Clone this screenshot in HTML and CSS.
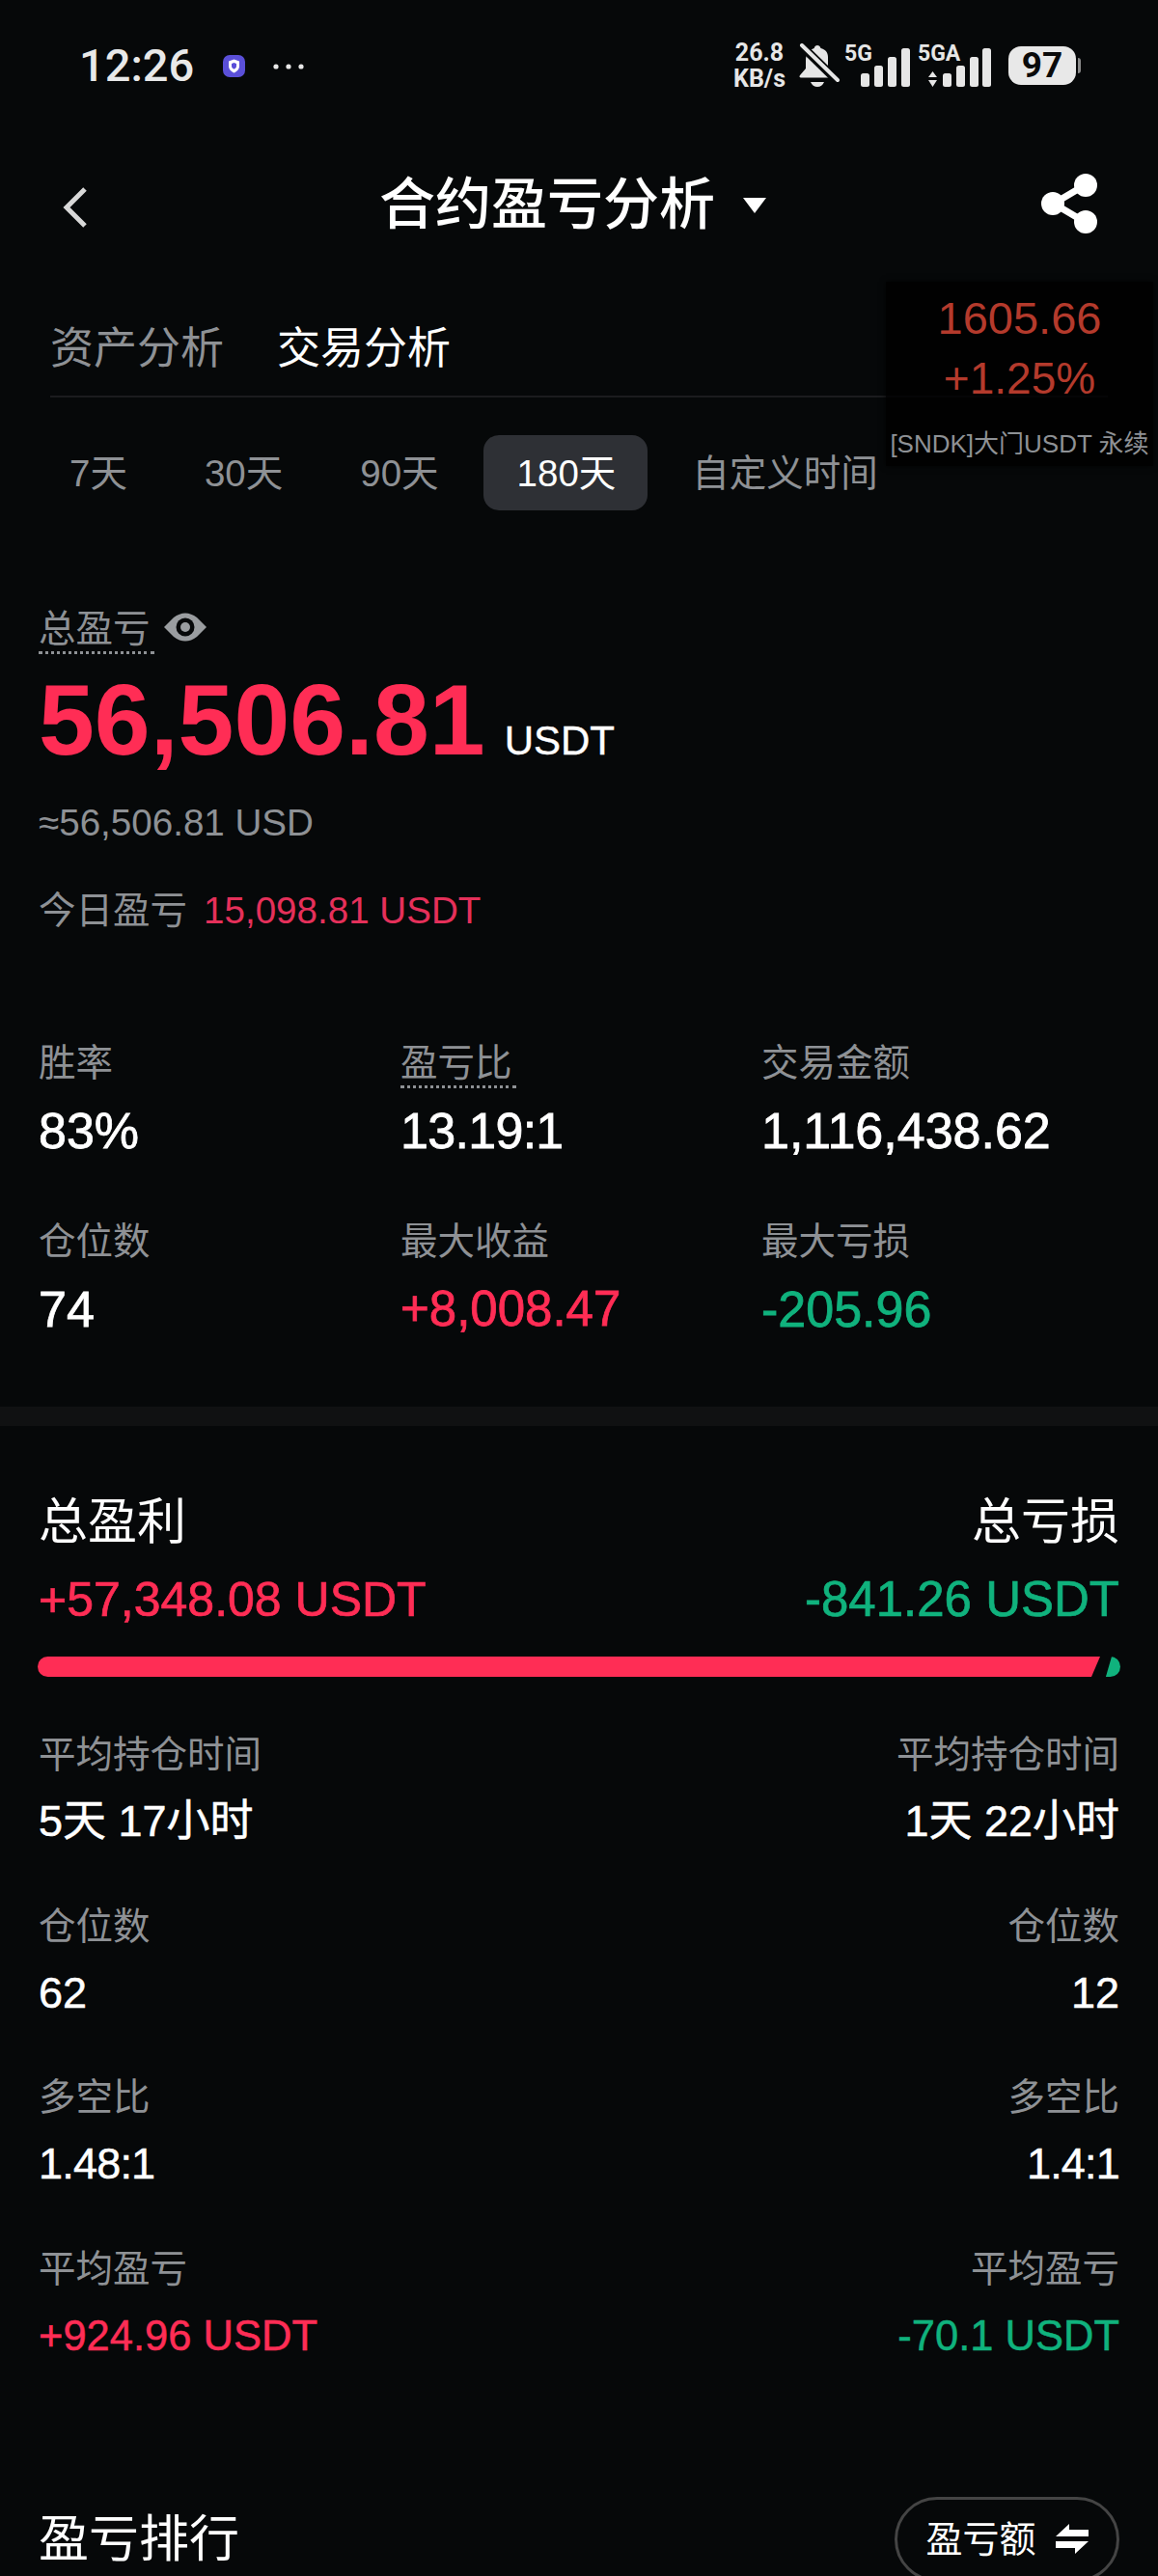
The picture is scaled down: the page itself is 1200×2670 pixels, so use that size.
FILE: index.html
```html
<!DOCTYPE html>
<html lang="zh-CN">
<head>
<meta charset="utf-8">
<title>合约盈亏分析</title>
<link rel="stylesheet" href="styles.css">
</head>
<body>
<div class="page">
  <div class="status">
    <div class="status-left">
      <span class="clock">12:26</span>
      <svg class="shield" viewBox="0 0 23 23" width="23" height="23"><rect width="23" height="23" rx="7" fill="#5a4fd8"/><path d="M11.500 4.500l5.500 2v5c0 3.500-2.500 5.500-5.500 7-3-1.500-5.500-3.500-5.500-7v-5z" fill="#fff"/><path d="M11.500 8l2.500 1v2.500c0 1.500-1 2.500-2.500 3.200-1.500-.7-2.500-1.700-2.500-3.200V9z" fill="#5a4fd8"/></svg>
      <svg class="dots" viewBox="0 0 32 6" width="32" height="6"><circle cx="3" cy="3" r="2.600" fill="#e8e8e8"/><circle cx="16" cy="3" r="2.600" fill="#e8e8e8"/><circle cx="29" cy="3" r="2.600" fill="#e8e8e8"/></svg>
    </div>
    <div class="status-right">
      <div class="speed"><span>26.8</span><span>KB/s</span></div>
      <svg class="bell" viewBox="0 0 42 46" width="42" height="46"><path d="M19 2c-1.500 0-3 1-3.300 3C9 7 7 12 7 18v8l-6 7c-1 1.500-.5 2.500 1 2.500h29c1.500 0 2-1 1-2.500l-2-2.500V14C30 9 27 6 22.500 5 22 3 20.500 2 19 2z" fill="#e6e6e6"/><path d="M12 40h14c-1 3-4 5-7 5s-6-2-7-5z" fill="#e6e6e6"/><path d="M-1 -1L41 40" stroke="#060809" stroke-width="9"/><path d="M3 2L40 38" stroke="#e6e6e6" stroke-width="4" stroke-linecap="round"/></svg>
      <svg class="signal" viewBox="0 -6 152 50" width="152" height="50">
        <text class="net" x="0" y="17">5G</text>
        <rect x="17" y="30" width="9" height="14" rx="2.500"/><rect x="31" y="22" width="9" height="22" rx="2.500"/><rect x="45" y="13" width="9" height="31" rx="2.500"/><rect x="59" y="4" width="9" height="40" rx="2.500"/>
        <text class="net" x="76" y="17">5GA</text>
        <path d="M91.500 28l4.500 6h-9zM91.500 44l-4.500-7h9z"/>
        <rect x="102" y="30" width="9" height="14" rx="2.500"/><rect x="116" y="22" width="9" height="22" rx="2.500"/><rect x="130" y="13" width="9" height="31" rx="2.500"/><rect x="143" y="4" width="9" height="40" rx="2.500"/>
      </svg>
      <div class="battery"><span class="battery-level">97</span><span class="battery-tip"></span></div>
    </div>
  </div>

  <header class="header">
    <svg class="back" viewBox="0 0 26 44" width="26" height="44"><path d="M23 3L4 22l19 19" fill="none" stroke="#d8d8d8" stroke-width="5"/></svg>
    <div class="title"><span>合约盈亏分析</span><svg class="caret" viewBox="0 0 24 16" width="24" height="16"><path d="M0 0h24L12 16z" fill="#fff"/></svg></div>
    <svg class="share" viewBox="0 0 60 62" width="60" height="62"><path d="M45 12L13 31l32 19" fill="none" stroke="#fff" stroke-width="7"/><circle cx="46" cy="12" r="12" fill="#fff"/><circle cx="12" cy="31" r="12" fill="#fff"/><circle cx="46" cy="50" r="12" fill="#fff"/></svg>
  </header>

  <nav class="tabs">
    <span class="tab">资产分析</span>
    <span class="tab tab-on">交易分析</span>
  </nav>

  <div class="periods">
    <span class="period">7天</span>
    <span class="period">30天</span>
    <span class="period">90天</span>
    <span class="period period-on">180天</span>
    <span class="period">自定义时间</span>
  </div>

  <aside class="ticker">
    <div class="ticker-price">1605.66</div>
    <div class="ticker-change">+1.25%</div>
    <div class="ticker-name">[SNDK]大门USDT 永续</div>
  </aside>

  <section class="hero">
    <div class="hero-label">
      <span class="label dotted">总盈亏</span>
      <svg class="eye" viewBox="0 0 44 30" width="44" height="30"><path d="M0 15L10 5Q22-4 34 5L44 15 34 25Q22 34 10 25z" fill="#9a9da0"/><circle cx="22" cy="15" r="9.500" fill="#060809"/><circle cx="22" cy="15" r="5" fill="#9a9da0"/></svg>
    </div>
    <div class="hero-amount"><span class="hero-number">56,506.81</span><span class="hero-unit">USDT</span></div>
    <div class="hero-usd">≈56,506.81 USD</div>
    <div class="today"><span class="label">今日盈亏</span><span class="today-value">15,098.81 USDT</span></div>
  </section>

  <section class="stats">
    <div class="stat"><span class="label">胜率</span><span class="stat-value">83%</span></div>
    <div class="stat"><span class="label dotted">盈亏比</span><span class="stat-value stat-ratio">13.19:1</span></div>
    <div class="stat"><span class="label">交易金额</span><span class="stat-value">1,116,438.62</span></div>
    <div class="stat"><span class="label">仓位数</span><span class="stat-value">74</span></div>
    <div class="stat"><span class="label">最大收益</span><span class="stat-value up">+8,008.47</span></div>
    <div class="stat"><span class="label">最大亏损</span><span class="stat-value down">-205.96</span></div>
  </section>

  <div class="section-gap"></div>

  <section class="totals">
    <div class="split"><span class="total-title">总盈利</span><span class="total-title">总亏损</span></div>
    <div class="split total-row"><span class="total-value up">+57,348.08 USDT</span><span class="total-value down">-841.26 USDT</span></div>
    <div class="bar"><span class="bar-up"></span><span class="bar-down"></span></div>

    <div class="split metrics">
      <div class="metric"><span class="label">平均持仓时间</span><span class="metric-value">5天 17小时</span></div>
      <div class="metric metric-end"><span class="label">平均持仓时间</span><span class="metric-value">1天 22小时</span></div>
    </div>
    <div class="split metrics">
      <div class="metric"><span class="label">仓位数</span><span class="metric-value">62</span></div>
      <div class="metric metric-end"><span class="label">仓位数</span><span class="metric-value">12</span></div>
    </div>
    <div class="split metrics">
      <div class="metric"><span class="label">多空比</span><span class="metric-value metric-ratio">1.48:1</span></div>
      <div class="metric metric-end"><span class="label">多空比</span><span class="metric-value metric-ratio">1.4:1</span></div>
    </div>
    <div class="split metrics">
      <div class="metric"><span class="label">平均盈亏</span><span class="metric-value up">+924.96 USDT</span></div>
      <div class="metric metric-end"><span class="label">平均盈亏</span><span class="metric-value down">-70.1 USDT</span></div>
    </div>
  </section>

  <section class="ranking">
    <h2 class="ranking-title">盈亏排行</h2>
    <button class="pill"><span>盈亏额</span><svg viewBox="0 0 34 31" width="34" height="31"><path d="M0 13L14 0v6h20v7zM34 18L20 31v-6H0v-7z" fill="#fff"/></svg></button>
  </section>
</div>
</body>
</html>
```
FILE: styles.css
```css
* { box-sizing: border-box; }
html, body { margin: 0; padding: 0; background: #060809; }
body {
  font-family: "Liberation Sans", "Noto Sans CJK SC", sans-serif;
  color: #fff;
}
.page {
  position: relative;
  width: 1200px;
  height: 2670px;
  overflow: hidden;
  background: #060809;
}

/* status bar */
.status {
  height: 136px;
  padding: 0 85px 0 82px;
  display: flex;
  align-items: center;
  justify-content: space-between;
}
.status-left { display: flex; align-items: center; }
.clock { font: 500 47px/50px Roboto, sans-serif; color: #e8e8e8; width: 149px; }
.dots { margin: 2px 0 0 29px; }
.status-right { display: flex; align-items: center; }
.speed {
  display: flex;
  flex-direction: column;
  align-items: center;
  gap: 4px;
  width: 54px;
  font: 700 25px/23px Roboto, sans-serif;
  color: #e6e6e6;
}
.bell { margin-left: 14px; }
.signal { margin-left: 5px; margin-top: -6px; fill: #e6e6e6; }
.net { font: 700 23px Roboto, sans-serif; }
.battery {
  position: relative;
  margin-left: 18px;
  width: 70px;
  height: 40px;
  border-radius: 13px;
  background: #e8e8e8;
  color: #0a0a0a;
  font: 700 37px/40px Roboto, sans-serif;
  text-align: center;
}
.battery-tip {
  position: absolute;
  right: -5px;
  top: 12px;
  width: 3px;
  height: 16px;
  border-radius: 0 3px 3px 0;
  background: #8a8a8a;
}

/* header */
.header {
  height: 150px;
  padding: 0 61px 0 65px;
  display: flex;
  align-items: center;
  justify-content: space-between;
}
.back { margin-top: 8px; }
.title {
  display: flex;
  align-items: center;
  gap: 29px;
  margin: 2px 0 0 17px;
  font-size: 58px;
  line-height: 70px;
  font-weight: 500;
}
.caret { margin-top: 2px; }

/* tabs */
.tabs {
  width: 1096px;
  height: 126px;
  margin-left: 52px;
  padding-top: 46px;
  display: flex;
  gap: 55px;
  border-bottom: 2px solid #1b1c1e;
}
.tab { font-size: 45px; line-height: 60px; color: #8e9195; }
.tab-on { color: #fff; }

/* periods */
.periods {
  margin-top: 39px;
  padding-left: 38px;
  display: flex;
  gap: 12px;
}
.period {
  height: 78px;
  padding: 0 34px;
  border-radius: 16px;
  font-size: 38.5px;
  line-height: 80px;
  color: #8e9195;
}
.period-on { background: #2e3035; color: #fff; padding: 0 33px 0 35px; }

/* floating ticker */
.ticker {
  position: absolute;
  left: 918px;
  top: 292px;
  width: 277px;
  height: 191px;
  background: rgba(0, 0, 0, .8);
  box-shadow: 0 0 6px rgba(0, 0, 0, .8);
  text-align: center;
}
.ticker-price { margin-top: 12px; font-size: 47px; line-height: 52px; color: #b43a2c; }
.ticker-change { margin-top: 10px; font-size: 46px; line-height: 52px; color: #b43a2c; }
.ticker-name { margin-top: 25px; font-size: 26px; line-height: 34px; color: #8e9195; white-space: nowrap; }

/* hero */
.hero { margin-top: 98px; padding-left: 40px; }
.label { font-size: 38.5px; line-height: 50px; color: #8e9195; }
.dotted {
  display: block;
  margin: 2px 0 -1px;
  padding-right: 4px;
  line-height: 46px;
  border-bottom: 3px dotted #8e9195;
}
.hero-label { display: flex; align-items: flex-start; height: 51px; }
.eye { margin: 8px 0 0 10px; }
.hero-amount { margin-top: 13px; height: 110px; line-height: 110px; white-space: nowrap; }
.hero-number { font-size: 104px; font-weight: 700; color: #ff2d55; }
.hero-unit { margin-left: 20px; font-size: 42px; -webkit-text-stroke: .4px #fff; }
.hero-usd { margin-top: 27px; font-size: 38.6px; line-height: 50px; color: #8e9195; }
.today { margin-top: 41px; display: flex; gap: 17px; line-height: 50px; }
.today-value { font-size: 38.6px; line-height: 50px; color: #e5305a; }

/* stats */
.stats {
  margin-top: 108px;
  padding-left: 40px;
  display: grid;
  grid-template-columns: 375px 374px auto;
  row-gap: 60px;
}
.stat { display: flex; flex-direction: column; align-items: flex-start; }
.stat-value {
  margin-top: 15px;
  font-size: 52px;
  line-height: 60px;
  -webkit-text-stroke: .8px currentColor;
}
.stat-value.up { font-size: 51px; }
.stat-ratio { letter-spacing: -.7px; }
.up { color: #ff2d55; }
.down { color: #10b27d; }

.section-gap { height: 20px; margin-top: 71px; background: #101112; }

/* totals */
.totals { margin-top: 70px; padding: 0 40px; }
.split { display: flex; justify-content: space-between; }
.total-title { font-size: 51px; line-height: 60px; font-weight: 400; }
.total-row { margin-top: 20px; }
.total-value { font-size: 50px; line-height: 60px; -webkit-text-stroke: .7px currentColor; }
.total-value.down { font-size: 51px; }
.bar { display: flex; margin-top: 29px; height: 21px; width: 1122px; margin-left: -1px; }
.bar-up {
  width: 1101px;
  background: #ff2d55;
  border-radius: 11px 0 0 11px;
  clip-path: polygon(0 0, 100% 0, calc(100% - 9px) 100%, 0 100%);
  margin-right: -8px;
}
.bar-down {
  width: 29px;
  background: #10b27d;
  border-radius: 0 11px 11px 0;
  clip-path: polygon(69% 0, 100% 0, 100% 100%, 48% 100%);
}
.metrics { margin-top: 56px; }
.metrics + .metrics { margin-top: 55.5px; }
.metric { display: flex; flex-direction: column; align-items: flex-start; }
.metric-end { align-items: flex-end; }
.metric-value { margin-top: 16px; font-size: 45px; line-height: 56px; color: #fff; -webkit-text-stroke: .5px currentColor; }
.metric-value.up { color: #ff2d55; font-size: 43.5px; }
.metric-value.down { color: #10b27d; font-size: 43.5px; }
.metric-ratio { letter-spacing: -.8px; }

/* ranking */
.ranking {
  margin-top: 139px;
  padding: 0 40px;
  display: flex;
  align-items: center;
  justify-content: space-between;
}
.ranking-title { margin: 0; font-size: 52px; line-height: 88px; font-weight: 400; }
.pill {
  width: 233px;
  height: 88px;
  padding: 0;
  display: flex;
  align-items: center;
  justify-content: center;
  gap: 20px;
  border: 3px solid #444;
  border-radius: 44px;
  background: none;
  color: #fff;
  font: 38px/50px "Liberation Sans", "Noto Sans CJK SC", sans-serif;
}
```
